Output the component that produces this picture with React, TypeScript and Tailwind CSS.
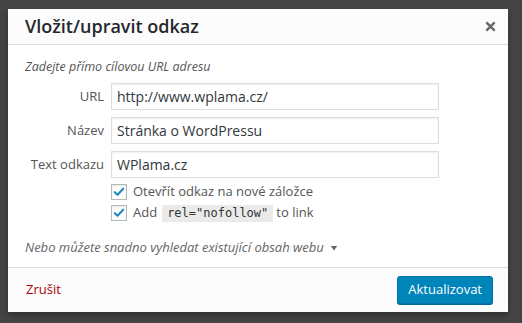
import { FC } from "react";

const Checkbox: FC = () => (
  <span className="flex h-4 w-4 shrink-0 items-center justify-center border border-[#b4b9be] bg-white shadow-[inset_0_1px_2px_rgba(0,0,0,0.1)]">
    <svg viewBox="0 0 16 16" className="h-[14px] w-[14px]">
      <path
        d="M3.2 8.2 L6.3 11.2 L12.8 4.2"
        fill="none"
        stroke="#1e8cbe"
        strokeWidth="2.4"
        strokeLinecap="round"
        strokeLinejoin="round"
      />
    </svg>
  </span>
);

const Row: FC<{ label: string; value: string }> = ({ label, value }) => (
  <div className="flex items-center">
    <label className="w-[86px] pr-[7px] text-right text-[13px] text-[#555]">
      {label}
    </label>
    <div className="flex h-[27px] w-[328px] items-center border border-[#ddd] bg-white px-[5px] text-[14px] text-[#32373c] shadow-[inset_0_1px_2px_rgba(0,0,0,0.07)]">
      {value}
    </div>
  </div>
);

const App: FC = () => {
  return (
    <div
      className="h-[323px] w-[522px] bg-[#444] pt-[9px] pl-[8px]"
      style={{ fontFamily: '"Open Sans", "Noto Sans", sans-serif' }}
    >
      <div className="flex h-[303px] w-[500px] flex-col bg-white shadow-[0_3px_6px_rgba(0,0,0,0.3)]">
        <div className="flex h-[36px] items-center justify-between border-b border-[#ddd] bg-[#fcfcfc] pl-[17px] pr-[12px]">
          <h1 className="text-[18px] font-semibold text-[#23282d]">
            Vložit/upravit odkaz
          </h1>
          <svg viewBox="0 0 12 12" className="h-[11px] w-[11px]">
            <path
              d="M1.5 1.5 L10.5 10.5 M10.5 1.5 L1.5 10.5"
              stroke="#666"
              strokeWidth="2.6"
            />
          </svg>
        </div>
        <div className="flex-1 px-[17px] pt-[13px]">
          <p className="text-[12.5px] italic leading-[18px] text-[#555]">
            Zadejte přímo cílovou URL adresu
          </p>
          <div className="mt-[7px] flex flex-col gap-[7px]">
            <Row label="URL" value="http://www.wplama.cz/" />
            <Row label="Název" value="Stránka o WordPressu" />
            <Row label="Text odkazu" value="WPlama.cz" />
          </div>
          <div className="mt-[6px] flex flex-col gap-[5px] pl-[86px] text-[13px] text-[#555]">
            <div className="flex h-4 items-center gap-[6px]">
              <Checkbox />
              <span>Otevřít odkaz na nové záložce</span>
            </div>
            <div className="flex h-4 items-center">
              <Checkbox />
              <span className="ml-[6px]">Add</span>
              <code
                className="ml-[5px] bg-[#eaeaea] px-[5px] text-[12px] leading-[17px] text-[#333]"
                style={{ fontFamily: '"DejaVu Sans Mono", monospace' }}
              >
                rel="nofollow"
              </code>
              <span className="ml-[3px]">to link</span>
            </div>
          </div>
          <div className="mt-[17px] flex items-center gap-[6px] text-[13px] italic text-[#666]">
            <span>Nebo můžete snadno vyhledat existující obsah webu</span>
            <svg viewBox="0 0 10 10" className="h-[8px] w-[8px]">
              <path d="M1 2.5 L9 2.5 L5 8 Z" fill="#666" />
            </svg>
          </div>
        </div>
        <div className="flex h-[45px] items-center justify-between border-t border-[#ddd] bg-[#fcfcfc] pl-[18px] pr-[15px]">
          <span className="text-[13px] text-[#a00]">Zrušit</span>
          <button
            type="button"
            className="h-[28px] rounded-[3px] border border-[#0073aa] bg-[#0085ba] px-[10px] text-[13px] text-white shadow-[0_1px_0_#006799]"
          >
            Aktualizovat
          </button>
        </div>
      </div>
    </div>
  );
};
export default App;
